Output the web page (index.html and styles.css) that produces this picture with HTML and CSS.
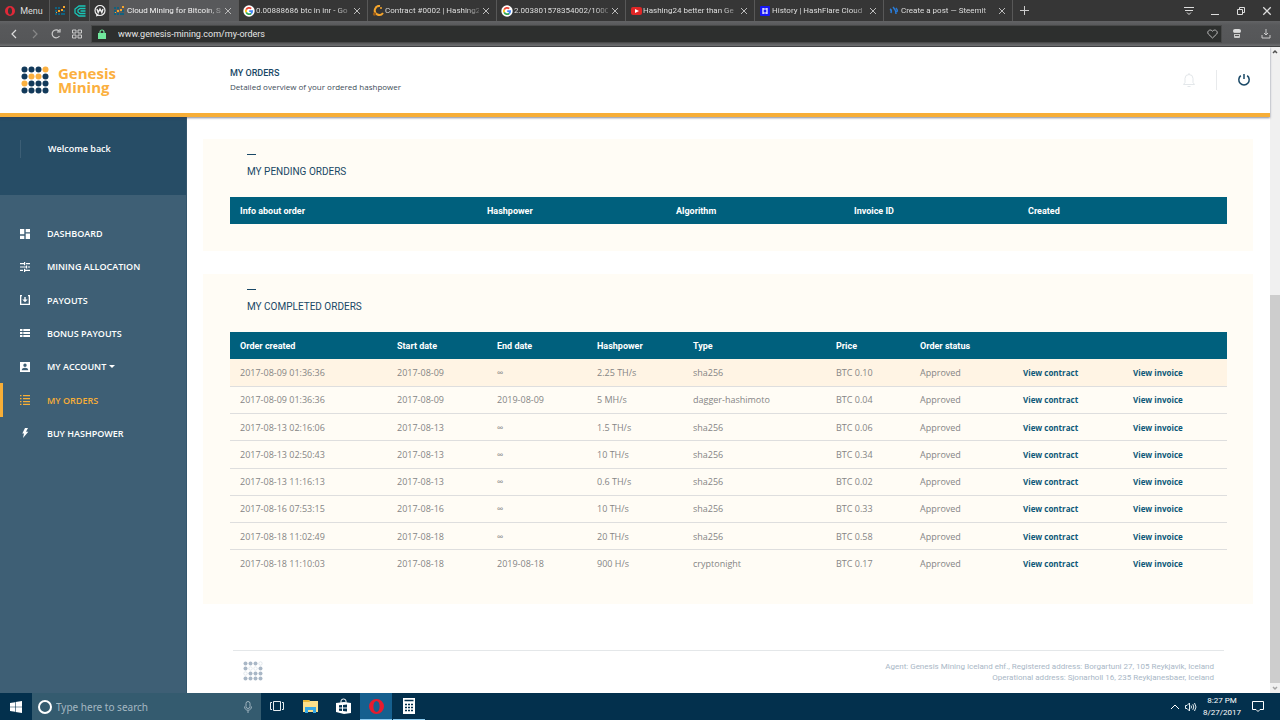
FILE: index.html
```html
<!DOCTYPE html>
<html lang="en">
<head>
<meta charset="utf-8">
<title>Genesis Mining - My Orders</title>
<link rel="stylesheet" href="styles.css">
</head>
<body>
<svg class="defs" aria-hidden="true">
  <symbol id="close" viewBox="0 0 8 8"><path d="M1 1l6 6M7 1L1 7" stroke="currentColor" fill="none"/></symbol>
  <symbol id="google" viewBox="0 0 12 12"><circle cx="6" cy="6" r="5.7" fill="#fff"/><g fill="none" stroke-width="1.7"><path d="M8.2 3.6A3.2 3.2 0 0 0 3.2 4.6" stroke="#ea4335"/><path d="M3.2 4.6a3.2 3.2 0 0 0 0 2.8" stroke="#fbbc05"/><path d="M3.2 7.4a3.2 3.2 0 0 0 4.9 1.1" stroke="#34a853"/><path d="M8.1 8.5a3.2 3.2 0 0 0 1.1-2.4H6.2" stroke="#4285f4"/></g></symbol>
  <symbol id="minidots" viewBox="0 0 10 10"><g fill="#12617e"><path d="M0 1h2v2H0zM3 1h2v2H3zM0 4h2v2H0zM8 4h2v2H8zM3 7h2v2H3zM6 7h2v2H6zM8 7h2v2H8zM0 7h2v2H0z"/></g><g fill="#f5a52c"><path d="M8 0h2v2H8zM3 4h2v2H3zM6 3h2v2H6zM1 6h1v1H1z"/></g></symbol>
  <symbol id="opera" viewBox="0 0 16 16"><path fill-rule="evenodd" d="M8 0a8 8 0 1 0 0 16A8 8 0 0 0 8 0zm0 2.2c2 0 3.3 2.5 3.3 5.8S10 13.8 8 13.8 4.700 11.300 4.700 8 6 2.200 8 2.200z" fill="currentColor"/></symbol>
</svg>

<div class="tabbar">
  <button class="menu"><svg width="10" height="10"><use href="#opera"/></svg><span>Menu</span></button>
  <button class="pin" aria-label="Genesis Mining"><svg width="10" height="10"><use href="#minidots"/></svg></button>
  <button class="pin" aria-label="Pinned tab"><svg width="12" height="12" viewBox="0 0 12 12" fill="none" stroke="#19c5b7"><path d="M11.500 1H5L1 4v4l4 3h6.500M11.500 3.500H6L4 5v2l2 1.500h5.500M6.500 6h5" stroke-width="1.300"/></svg></button>
  <button class="pin" aria-label="Pinned tab"><svg width="12" height="12" viewBox="0 0 12 12"><circle cx="6" cy="5.500" r="5" fill="none" stroke="#eee" stroke-width="1.200"/><path d="M2 11.500l.5-3 2.500 2z" fill="#eee"/><path d="M3 4l1.200 3.500L6 4l1.800 3.500L9 4" stroke="#eee" fill="none" stroke-width="1.400"/></svg></button>
  <button class="tab active"><svg width="10" height="10"><use href="#minidots"/></svg><span>Cloud Mining for Bitcoin, S</span><svg class="x"><use href="#close"/></svg></button>
  <button class="tab"><svg width="12" height="12"><use href="#google"/></svg><span>0.00888686 btc in inr - Go</span><svg class="x"><use href="#close"/></svg></button>
  <button class="tab"><svg width="12" height="12" viewBox="0 0 12 12"><path d="M8 1a4.500 4.500 0 1 0 3 7" fill="none" stroke="#f5a52c" stroke-width="2"/><circle cx="2.500" cy="9" r="1.700" fill="#9a5c17"/><circle cx="9" cy="3" r="1" fill="#f5a52c"/></svg><span>Contract #0002 | Hashing2</span><svg class="x"><use href="#close"/></svg></button>
  <button class="tab"><svg width="12" height="12"><use href="#google"/></svg><span>2.003801578354002/1000</span><svg class="x"><use href="#close"/></svg></button>
  <button class="tab"><svg width="12" height="12" viewBox="0 0 12 12"><rect x="1" y="2" width="11" height="8" rx="2" fill="#e02626"/><path d="M5 4l4 2-4 2z" fill="#fff"/></svg><span>Hashing24 better than Ge</span><svg class="x"><use href="#close"/></svg></button>
  <button class="tab"><svg width="12" height="12" viewBox="0 0 12 12"><rect x="1" y="1" width="10" height="10" rx="1" fill="#1717f5"/><path d="M4 3v6M8 3v6M4 4h4v4H4" stroke="#fff" fill="none" stroke-width="1.200"/></svg><span>History | HashFlare Cloud</span><svg class="x"><use href="#close"/></svg></button>
  <button class="tab"><svg width="12" height="12" viewBox="0 0 12 12" stroke="#2a7bd6" fill="none" stroke-width="1.500"><path d="M2 4q2 1 1 4M5 2q3 3 3 7M8 3q2 2 1 4"/></svg><span>Create a post — Steemit</span><svg class="x"><use href="#close"/></svg></button>
  <button class="newtab" aria-label="New tab"><svg width="9" height="9" viewBox="0 0 9 9" stroke="#ccc"><path d="M4.500 0v9M0 4.500h9"/></svg></button>
  <div class="window-buttons">
    <button aria-label="Tab menu"><svg width="10" height="10" viewBox="0 0 10 10" stroke="currentColor" fill="none"><path d="M0 1.500h10M1 4.500h8M3 6.500l2 2 2-2"/></svg></button>
    <button aria-label="Minimize"><svg width="10" height="10" viewBox="0 0 10 10" stroke="currentColor"><path d="M1 8.500h8"/></svg></button>
    <button aria-label="Restore"><svg width="10" height="10" viewBox="0 0 10 10" stroke="currentColor" fill="none"><path d="M1.500 3.500h5v5h-5zM3.500 3V1.500h5v5H7"/></svg></button>
    <button aria-label="Close"><svg width="10" height="10"><use href="#close"/></svg></button>
  </div>
</div>

<div class="toolbar">
  <div class="nav-buttons">
    <button aria-label="Back"><svg width="10" height="10" viewBox="0 0 10 10" fill="none" stroke="#ddd" stroke-width="1.200"><path d="M7 1L3 5l4 4"/></svg></button>
    <button aria-label="Forward"><svg width="10" height="10" viewBox="0 0 10 10" fill="none" stroke="#888" stroke-width="1.200"><path d="M3 1l4 4-4 4"/></svg></button>
    <button aria-label="Reload"><svg width="10" height="10" viewBox="0 0 10 10" fill="none" stroke="#ccc" stroke-width="1.200"><path d="M8.500 7A4 4 0 1 1 8 2M9 0v3H6"/></svg></button>
    <button aria-label="Speed dial"><svg width="10" height="10" viewBox="0 0 10 10" fill="none" stroke="#ccc"><path d="M.5 1h3.500v3H.5zM6 1h3.500v3H6zM.5 6h3.500v3H.5zM6 6h3.500v3H6z"/></svg></button>
  </div>
  <div class="address">
    <svg width="8" height="10" viewBox="0 0 8 10"><path d="M2 5V3a2 2 0 0 1 4 0v2" fill="none" stroke="#70e89c" stroke-width="1.200"/><rect y="4" width="8" height="6" fill="#70e89c"/></svg>
    <input type="text" aria-label="Address" value="www.genesis-mining.com/my-orders">
    <svg width="11" height="10" viewBox="0 0 11 10"><path d="M5.500 9L1.300 5C-.6 2.800 2.800-.8 5.500 2.200 8.200-.8 11.600 2.800 9.700 5z" fill="none" stroke="#bbb"/></svg>
  </div>
  <div class="extras">
    <button aria-label="Extension"><svg width="8" height="9" viewBox="0 0 8 9"><rect x="0" y="0" width="8" height="4" rx="2" fill="#ddd"/><rect x="1" y="3" width="6" height="6" rx="1" fill="#c8c8c8"/><path d="M1 4.500h6M2 6.500h4" stroke="#555"/></svg></button>
    <button aria-label="Downloads"><svg width="10" height="10" viewBox="0 0 10 10" fill="none" stroke="#ccc"><path d="M5 0v6M3 4l2 2 2-2M1 6v3h8V6"/></svg></button>
  </div>
</div>

<div class="viewport">
  <div class="page">
    <header class="header">
      <div class="brand">
        <svg width="28" height="28" viewBox="0 0 28 28" fill="#12395a"><circle cx="3.500" cy="3.500" r="3"/><circle cx="10.500" cy="3.500" r="3"/><circle cx="17.500" cy="3.500" r="3"/><circle cx="24.500" cy="3.500" r="3" fill="#fbb040"/><circle cx="3.500" cy="10.500" r="3"/><circle cx="10.500" cy="10.500" r="3" fill="#fbb040"/><circle cx="17.500" cy="10.500" r="3" fill="#fbb040"/><circle cx="24.500" cy="10.500" r="3"/><circle cx="3.500" cy="17.500" r="3" fill="#fbb040"/><circle cx="10.500" cy="17.500" r="3"/><circle cx="17.500" cy="17.500" r="3"/><circle cx="24.500" cy="17.500" r="3"/><circle cx="3.500" cy="24.500" r="3"/><circle cx="10.500" cy="24.500" r="3"/><circle cx="17.500" cy="24.500" r="3"/><circle cx="24.500" cy="24.500" r="3"/></svg>
        <div class="brand-name">Genesis<br>Mining</div>
      </div>
      <div class="heading"><h1>MY ORDERS</h1><p>Detailed overview of your ordered hashpower</p></div>
      <div class="actions">
        <button class="bell" aria-label="Notifications"><svg width="14" height="16" viewBox="0 0 14 16" fill="none" stroke="#e3e7ea"><path d="M1.500 12.500h11L11 10.500V6.500a4 4 0 0 0-8 0v4z"/><path d="M7 2.500V1M5.500 14.500h3"/></svg></button>
        <button class="power" aria-label="Log out"><svg width="14" height="14" viewBox="0 0 14 14" fill="none" stroke="#194866" stroke-width="1.500"><path d="M3.800 2.700a5.200 5.200 0 1 0 6.400 0M7 1v5"/></svg></button>
      </div>
    </header>
    <div class="body">
      <aside class="sidebar">
        <div class="welcome">Welcome back</div>
        <nav class="nav">
          <a href="#"><svg viewBox="0 0 10 10"><path d="M0 0h4.300v5.300H0zM0 6.700h4.300V10H0zM5.700 0H10v3.300H5.700zM5.700 4.600H10V10H5.700z"/></svg>DASHBOARD</a>
          <a href="#"><svg viewBox="0 0 10 10"><path d="M0 1h4v1.200H0zM6 1h4v1.200H6zM4 0h1.200v3.200H4zM0 4.400h6v1.200H0zM6 3.400h1.200v3.200H6zM8 4.400h2v1.200H8zM0 7.800h3v1.200H0zM4 6.800h1.200V10H4zM5 7.800h5v1.200H5z"/></svg>MINING ALLOCATION</a>
          <a href="#"><svg viewBox="0 0 10 10"><path d="M0 0h2v1.300h-.7v7.400h7.400V1.300H8V0h2v10H0zM4.300 2h1.400v2.500h2L5 7.300 2.300 4.500h2z"/></svg>PAYOUTS</a>
          <a href="#"><svg viewBox="0 0 10 10"><path d="M0 1h2.500v2H0zM3.300 1H10v2H3.300zM0 4h2.500v2H0zM3.300 4H10v2H3.300zM0 7h2.500v2H0zM3.300 7H10v2H3.300z"/></svg>BONUS PAYOUTS</a>
          <a href="#"><svg viewBox="0 0 10 10"><path fill-rule="evenodd" d="M0 0h10v10H0zM5 1.500a1.700 1.700 0 1 0 0 3.400 1.700 1.700 0 0 0 0-3.400zM1.700 8.300h6.600C8.300 5 1.700 5 1.700 8.300z"/></svg>MY ACCOUNT<i class="caret"></i></a>
          <a href="#" class="current" aria-current="page"><svg viewBox="0 0 10 10"><path d="M0 0h1.500v1.200H0zM3 0h7v1.200H3zM0 3h1.500v1.200H0zM3 3h7v1.200H3zM0 6h1.500v1.200H0zM3 6h7v1.200H3zM0 8.800h1.500V10H0zM3 8.800h7V10H3z"/></svg>MY ORDERS</a>
          <a href="#"><svg viewBox="0 0 10 10"><path d="M5 0h3L6 3.800h2.300L3 10l1-4.500H2.300z"/></svg>BUY HASHPOWER</a>
        </nav>
      </aside>
      <main class="main">
        <section class="panel">
          <h2>MY PENDING ORDERS</h2>
          <table class="pending">
            <thead><tr><th>Info about order</th><th>Hashpower</th><th>Algorithm</th><th>Invoice ID</th><th>Created</th></tr></thead>
          </table>
        </section>
        <section class="panel">
          <h2>MY COMPLETED ORDERS</h2>
          <table class="completed">
            <thead><tr><th>Order created</th><th>Start date</th><th>End date</th><th>Hashpower</th><th>Type</th><th>Price</th><th>Order status</th><th></th><th></th></tr></thead>
            <tbody>
              <tr class="hover"><td>2017-08-09 01:36:36</td><td>2017-08-09</td><td>∞</td><td>2.25 TH/s</td><td>sha256</td><td>BTC 0.10</td><td>Approved</td><td><a href="#">View contract</a></td><td><a href="#">View invoice</a></td></tr>
              <tr><td>2017-08-09 01:36:36</td><td>2017-08-09</td><td>2019-08-09</td><td>5 MH/s</td><td>dagger-hashimoto</td><td>BTC 0.04</td><td>Approved</td><td><a href="#">View contract</a></td><td><a href="#">View invoice</a></td></tr>
              <tr><td>2017-08-13 02:16:06</td><td>2017-08-13</td><td>∞</td><td>1.5 TH/s</td><td>sha256</td><td>BTC 0.06</td><td>Approved</td><td><a href="#">View contract</a></td><td><a href="#">View invoice</a></td></tr>
              <tr><td>2017-08-13 02:50:43</td><td>2017-08-13</td><td>∞</td><td>10 TH/s</td><td>sha256</td><td>BTC 0.34</td><td>Approved</td><td><a href="#">View contract</a></td><td><a href="#">View invoice</a></td></tr>
              <tr><td>2017-08-13 11:16:13</td><td>2017-08-13</td><td>∞</td><td>0.6 TH/s</td><td>sha256</td><td>BTC 0.02</td><td>Approved</td><td><a href="#">View contract</a></td><td><a href="#">View invoice</a></td></tr>
              <tr><td>2017-08-16 07:53:15</td><td>2017-08-16</td><td>∞</td><td>10 TH/s</td><td>sha256</td><td>BTC 0.33</td><td>Approved</td><td><a href="#">View contract</a></td><td><a href="#">View invoice</a></td></tr>
              <tr><td>2017-08-18 11:02:49</td><td>2017-08-18</td><td>∞</td><td>20 TH/s</td><td>sha256</td><td>BTC 0.58</td><td>Approved</td><td><a href="#">View contract</a></td><td><a href="#">View invoice</a></td></tr>
              <tr><td>2017-08-18 11:10:03</td><td>2017-08-18</td><td>2019-08-18</td><td>900 H/s</td><td>cryptonight</td><td>BTC 0.17</td><td>Approved</td><td><a href="#">View contract</a></td><td><a href="#">View invoice</a></td></tr>
            </tbody>
          </table>
        </section>
        <footer class="footer">
          <svg width="20" height="20" viewBox="0 0 20 20" fill="#a9b7c6"><circle cx="2.500" cy="2.500" r="2"/><circle cx="7.500" cy="2.500" r="2"/><circle cx="12.500" cy="2.500" r="2"/><circle cx="2.500" cy="7.500" r="2"/><circle cx="17.500" cy="7.500" r="2"/><circle cx="7.500" cy="12.500" r="2"/><circle cx="12.500" cy="12.500" r="2"/><circle cx="17.500" cy="12.500" r="2"/><circle cx="2.500" cy="17.500" r="2"/><circle cx="7.500" cy="17.500" r="2"/><circle cx="12.500" cy="17.500" r="2"/><circle cx="17.500" cy="17.500" r="2"/><g fill="none" stroke="#dde3e8" stroke-width=".8"><circle cx="17.500" cy="2.500" r="1.700"/><circle cx="7.500" cy="7.500" r="1.700"/><circle cx="12.500" cy="7.500" r="1.700"/><circle cx="2.500" cy="12.500" r="1.700"/></g></svg>
          <p>Agent: Genesis Mining Iceland ehf., Registered address: Borgartuni 27, 105 Reykjavik, Iceland<br>Operational address: Sjonarholl 16, 235 Reykjanesbaer, Iceland</p>
        </footer>
      </main>
    </div>
  </div>
  <div class="scrollbar">
    <svg width="10" height="10" viewBox="0 0 10 10" fill="none" stroke="#505050" stroke-width="1.500"><path d="M3 6l2-2 2 2"/></svg>
    <div class="track"><div class="thumb"></div></div>
    <svg width="10" height="10" viewBox="0 0 10 10" fill="none" stroke="#a3a3a3" stroke-width="1.500"><path d="M3 4l2 2 2-2"/></svg>
  </div>
</div>

<div class="taskbar">
  <button class="start" aria-label="Start"><svg width="12" height="12" viewBox="0 0 12 12" fill="#fff"><path d="M0 2l5-.8v4.500H0zM5.600 1L12 0v5.700H5.600zM0 6.300h5v4.500L0 10zM5.600 6.300H12V12l-6.400-1z"/></svg></button>
  <div class="search">
    <svg width="14" height="14" viewBox="0 0 14 14"><circle cx="7" cy="7" r="6" fill="none" stroke="#fff" stroke-width="2"/></svg>
    <input type="text" aria-label="Search" placeholder="Type here to search">
    <svg width="8" height="12" viewBox="0 0 8 12" fill="none" stroke="#9fb3bf"><rect x="2" y=".5" width="4" height="7" rx="2"/><path d="M.5 5.500C.5 10.500 7.500 10.500 7.500 5.500M4 9.500V12"/></svg>
  </div>
  <div class="apps">
    <button aria-label="Task view"><svg width="14" height="10" viewBox="0 0 14 10" fill="none" stroke="#e6edf1"><path d="M3.500.5h7v9h-7zM2 1.500H.5v7H2M12 1.500h1.500v7H12"/></svg></button>
    <button aria-label="File Explorer"><svg width="15" height="13" viewBox="0 0 15 13"><path d="M0 0h6l1 1h8v11H0z" fill="#fbe08b"/><path d="M0 0h6l1 2H0z" fill="#e9b93b"/><path d="M2 13V7h11v6h-3v-3H5v3z" fill="#36a9e6"/></svg></button>
    <button aria-label="Store"><svg width="15" height="16" viewBox="0 0 15 16"><path d="M5 5V3q0-2 2.500-2T10 3v2" fill="none" stroke="#fff"/><path d="M0 5l8-1 7 1v10l-7 1-8-2z" fill="#fff"/><path d="M3 7.300l3-.3v2.500H3zM7 6.900l4-.4v3H7zM3 10.500h3V13l-3-.3zM7 10.500h4v3l-4-.4z" fill="#03304d"/></svg></button>
    <button class="running selected" aria-label="Opera"><svg width="15" height="15" color="#e81b2d"><use href="#opera"/></svg></button>
    <button class="running" aria-label="Calculator"><svg width="12" height="16" viewBox="0 0 12 16"><path d="M0 0h12v16H0z" fill="#fff"/><path d="M1.500 2.500h9M2 6.500h2M5 6.500h2M8 6.500h2M2 9.500h2M5 9.500h2M8 9.500h2M2 12.500h2M5 12.500h2M8 12.500h2" stroke="#03304d" stroke-width="1.600"/></svg></button>
  </div>
  <div class="tray">
    <svg width="8" height="6" viewBox="0 0 8 6" fill="none" stroke="#fff"><path d="M0 5l4-4 4 4"/></svg>
    <svg width="12" height="10" viewBox="0 0 12 10" fill="none" stroke="#e3edf2"><path d="M.5 3.500H2L4.500 1v8L2 6.500H.5zM6 3.500q1 1.500 0 3M7.800 2.200q2 2.800 0 5.600M9.500 1q3 4 0 8"/></svg>
    <time>8:27 PM<br>8/27/2017</time>
    <svg class="notice" width="12" height="11" viewBox="0 0 12 11" fill="none" stroke="#fff"><path d="M.5.5h11v8H8l-2 2-2-2H.5z"/></svg>
  </div>
</div>
</body>
</html>
```

FILE: styles.css
```css
* { box-sizing: border-box; }
body {
  margin: 0;
  height: 100vh;
  display: flex;
  flex-direction: column;
  overflow: hidden;
  font-family: "Open Sans", "Noto Sans", sans-serif;
  font-size: 9px;
  color: #194866;
  background: #fff;
}
button, input { font: inherit; color: inherit; border: 0; padding: 0; margin: 0; background: none; outline: 0; }
button { display: flex; align-items: center; justify-content: center; }
a { color: inherit; text-decoration: none; }
h1, h2, p { margin: 0; }
svg { flex: none; display: block; }
.defs { position: absolute; width: 0; height: 0; }

/* Browser chrome */
.tabbar { display: flex; flex: none; height: 21px; background: #363636; color: #dedede; font-family: Roboto, sans-serif; font-size: 8px; }
.menu { width: 50px; gap: 5px; padding-right: 1px; border-right: 1px solid #585858; font-size: 9px; }
.menu svg { color: #e02938; }
.pin { width: 20px; border-right: 1px solid #555; }
.tab { flex: 0 1 129px; min-width: 0; gap: 1px; padding: 0 6px 0 4px; border-right: 1px solid #585858; }
.tab span { flex: 1; min-width: 0; white-space: nowrap; text-align: left; mask-image: linear-gradient(to right, #000 85%, rgba(0, 0, 0, .3)); }
.tab.active { background: #58595b; color: #f2f2f2; gap: 3px; }
.tab.active .x { margin-left: 0; }
.tab .x { width: 8px; height: 8px; margin-left: 2px; color: #bbb; }
.newtab { width: 22px; }
.window-buttons { display: flex; margin-left: auto; color: #ddd; }
.window-buttons button { width: 26px; }
.toolbar { display: flex; flex: none; align-items: center; height: 26px; background: linear-gradient(#626365, #58595b 4px, #555658 22px, #707173); border-bottom: 1px solid #3f4041; }
.nav-buttons { display: flex; width: 91px; padding-left: 3px; }
.nav-buttons button { width: 21px; }
.address { display: flex; flex: 1; align-items: center; gap: 12px; height: 18px; padding: 0 3px 0 6px; border: 1px solid #494a4a; background: #2d2f2e; }
.address input { flex: 1; min-width: 0; color: #e7e7e7; font-family: Roboto, sans-serif; }
.extras { display: flex; width: 58px; }
.extras button { flex: 1; }

/* Page */
.viewport { display: flex; flex: 1; min-height: 0; }
.page { display: flex; flex: 1; min-width: 0; flex-direction: column; }
.header { position: relative; display: flex; flex: none; align-items: center; height: 70px; border-bottom: 4px solid #f7ae37; box-shadow: 0 1px 2px rgba(50, 60, 90, .6); background: #fff; }
.brand { display: flex; gap: 9px; width: 230px; padding-left: 21px; align-items: center; }
.brand-name { font-size: 15px; line-height: 14px; font-weight: 700; color: #fbb040; }
.heading { line-height: 14px; }
.heading p { font-size: 8px; color: #3d4c58; }
h1 { font-family: Roboto, sans-serif; font-size: 9px; font-weight: 500; }
.actions { display: flex; margin-left: auto; }
.bell { width: 36px; height: 20px; padding-right: 20px; border-right: 1px solid #e8eaec; }
.power { width: 53px; height: 20px; }
.body { display: flex; flex: 1; min-height: 0; }
.sidebar { width: 187px; flex: none; background: #3e5f75; color: #fff; font-weight: 600; border-right: 1px solid #34566d; }
.welcome { height: 78px; padding: 23px 0 37px 20px; background: #274d66; line-height: 18px; }
.welcome::before { content: ""; display: inline-block; height: 18px; width: 27px; border-left: 1px solid #3c5e75; vertical-align: top; }
.nav { display: grid; grid-auto-rows: 1fr; height: 233px; margin-top: 22px; }
.nav a { display: flex; align-items: center; gap: 17px; padding-left: 20px; }
.nav svg { width: 10px; height: 10px; fill: currentColor; }
.nav .current { color: #f7ae37; border-left: 3px solid #f7ae37; padding-left: 17px; }
.caret { margin-left: -14px; border: 3px solid transparent; border-top-color: #fff; border-bottom: 0; }
.main { flex: 1; min-width: 0; padding: 22px 17px 0 16px; }
.panel { padding: 15px 26px 27px 27px; margin-bottom: 23px; background: #fffcf5; }
.panel h2 { margin: 0 0 17px 17px; font-family: Roboto, sans-serif; font-size: 10px; font-weight: 400; line-height: 16px; }
.panel h2::before { content: ""; display: block; width: 9px; height: 1px; margin-bottom: 9px; background: #194866; }
table { width: 100%; border-collapse: collapse; table-layout: fixed; }
th, td { height: 27px; padding: 0 0 0 10px; text-align: left; white-space: nowrap; }
th { background: #00607d; color: #fff; font-family: Roboto, sans-serif; font-weight: 700; }
td { color: #858585; border-bottom: 1px solid #dedede; }
td a { font-size: 8px; font-weight: 700; color: #0d5878; }
tr:last-child td { border-bottom: 0; }
.hover { background: #fff4e4; }
.completed { height: 245px; }
.pending th:nth-child(1) { width: 247px; }
.pending th:nth-child(2) { width: 189px; }
.pending th:nth-child(3) { width: 178px; }
.pending th:nth-child(4) { width: 174px; }
.completed th:nth-child(1) { width: 157px; }
.completed th:nth-child(2), .completed th:nth-child(3) { width: 100px; }
.completed th:nth-child(4) { width: 96px; }
.completed th:nth-child(5) { width: 143px; }
.completed th:nth-child(6) { width: 84px; }
.completed th:nth-child(7) { width: 103px; }
.completed th:nth-child(8) { width: 110px; }
.footer { display: flex; justify-content: space-between; margin: 46px 29px 0 30px; padding: 10px; border-top: 1px solid #e4e7e9; color: #a9b7c6; text-align: right; font-family: Roboto, sans-serif; font-size: 8px; line-height: 11px; }
.scrollbar { display: flex; flex-direction: column; width: 10px; background: #f0f0f0; }
.track { display: flex; flex: 1; align-items: flex-end; }
.thumb { width: 100%; height: 62%; background: #cdcdcd; }

/* Taskbar */
.taskbar { display: flex; flex: none; height: 27px; background: #03304d; color: #fff; font-family: "Noto Sans", sans-serif; }
.start { width: 32px; }
.search { display: flex; align-items: center; gap: 4px; width: 229px; padding: 0 9px 0 6px; background: #345b6f; }
.search input { flex: 1; min-width: 0; font-size: 10px; }
.search input::placeholder { color: #a5b8c2; opacity: 1; }
.apps { display: flex; gap: 1px; }
.apps button { width: 32px; border-bottom: 1px solid transparent; }
.apps .running { border-bottom: 1px solid #8ccbf0; }
.apps .selected { background: #16608f; }
.tray { display: flex; align-items: center; gap: 6px; margin-left: auto; padding-right: 16px; text-align: center; line-height: 12px; font-family: Roboto, sans-serif; font-size: 8px; }
.notice { margin-left: 5px; }
```
